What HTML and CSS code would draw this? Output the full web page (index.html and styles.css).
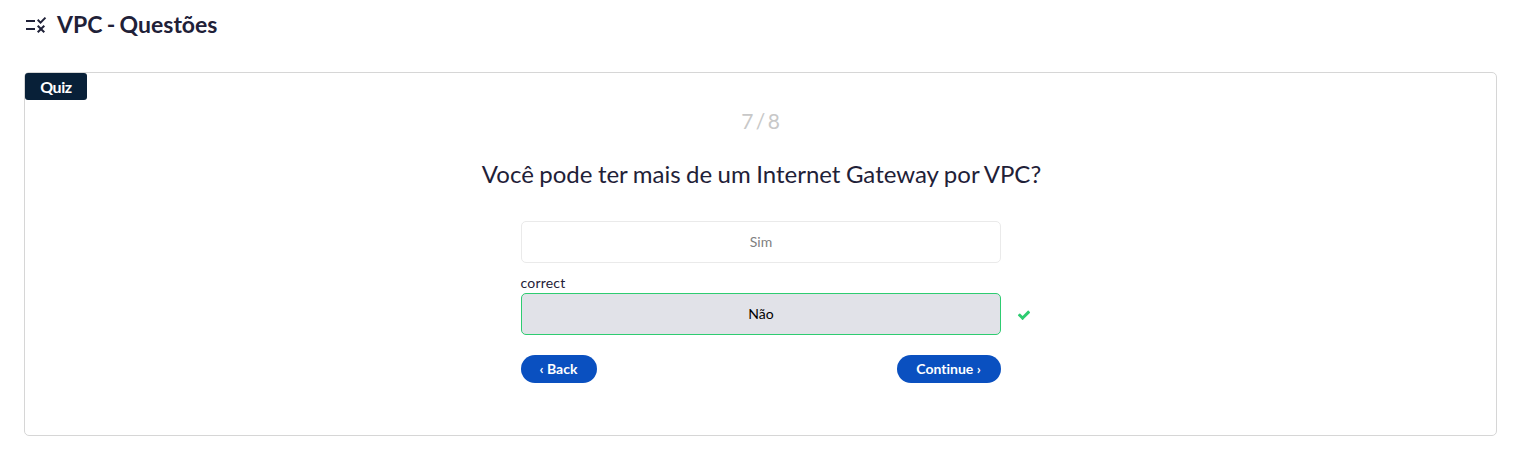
FILE: index.html
```html
<!DOCTYPE html>
<html lang="pt">
<head>
<meta charset="utf-8">
<title>VPC - Questões</title>
<link rel="stylesheet" href="styles.css">
</head>
<body>
<header class="page-header">
  <svg class="header-icon" viewBox="0 0 24 24"><path d="M16.54 11 13 7.46l1.41-1.41 2.12 2.12 4.24-4.24 1.41 1.41L16.54 11zM11 7H2v2h9V7zm10 6.41L19.59 12 17 14.59 14.41 12 13 13.41 15.59 16 13 18.59 14.41 20 17 17.41 19.59 20 21 18.59 18.41 16 21 13.41zM11 15H2v2h9v-2z"/></svg>
  <h1 class="page-title">VPC - Questões</h1>
</header>
<main class="quiz">
  <span class="quiz-label">Quiz</span>
  <div class="progress">7 / 8</div>
  <h2 class="question">Você pode ter mais de um Internet Gateway por VPC?</h2>
  <div class="answers">
    <button class="answer answer-muted">Sim</button>
    <div class="result">correct</div>
    <div class="answer-row">
      <button class="answer answer-correct">Não</button>
      <svg class="check" viewBox="0 0 1792 1792"><path d="M1671 566q0 40-28 68l-724 724-136 136q-28 28-68 28t-68-28l-136-136-362-362q-28-28-28-68t28-68l136-136q28-28 68-28t68 28l294 295 656-657q28-28 68-28t68 28l136 136q28 28 28 68z"/></svg>
    </div>
    <nav class="controls"><button class="pill pill-back">‹ Back</button><button class="pill pill-next">Continue ›</button></nav>
  </div>
</main>
</body>
</html>
```
FILE: styles.css
```css
* { box-sizing: border-box; }
body { margin: 0; background: #fff; color: #1f2138; font-family: Lato, sans-serif; font-variant-ligatures: none; }
button { font-family: inherit; font-variant-ligatures: none; margin: 0; }
.page-header { display: flex; align-items: center; gap: 9px; height: 50px; padding-left: 24px; }
.header-icon { width: 24px; height: 24px; fill: currentColor; }
.page-title { margin: 0; padding-bottom: 2px; font-size: 23px; line-height: 28px; font-weight: 700; word-spacing: -1.3px; }
.quiz { display: flex; flex-direction: column; align-items: center; height: 364px; margin: 22px 22px 0 24px; border: 1px solid #d6d6d6; border-radius: 5px; }
.quiz-label { align-self: flex-start; width: 62px; height: 27px; border-radius: 3px; background: #082038; color: #fff; font-size: 16px; font-weight: 700; letter-spacing: -0.4px; line-height: 27px; text-align: center; }
.progress { margin-top: 7px; color: #c8c8c8; font-size: 21px; line-height: 28px; word-spacing: -2.5px; letter-spacing: -0.2px; }
.question { margin: 22px 0 0 2px; font-size: 24px; font-weight: 400; line-height: 34px; word-spacing: -0.7px; }
.answers { width: 480px; margin-top: 30px; }
.answer { display: block; width: 480px; height: 42px; padding: 0 0 2px 1px; flex: none; border: 1px solid #eaeaea; border-radius: 5px; background: #fff; font-size: 14px; }
.answer-muted { color: #808080; }
.answer-correct { border-color: #2ecc71; background: #e1e2e8; color: #000; }
.result { margin-top: 11px; padding-bottom: 1px; font-size: 14px; line-height: 18px; letter-spacing: 0.2px; }
.answer-row { display: flex; align-items: center; gap: 16px; }
.check { flex: none; width: 14px; height: 14px; margin-top: 1px; fill: #2ecc71; }
.controls { display: flex; justify-content: space-between; margin-top: 20px; }
.pill { height: 28px; padding: 0 0 2px; border: 0; border-radius: 14px; background: #0a50c0; color: #fff; font-size: 14px; font-weight: 700; }
.pill-back { width: 76px; }
.pill-next { width: 104px; }
```
